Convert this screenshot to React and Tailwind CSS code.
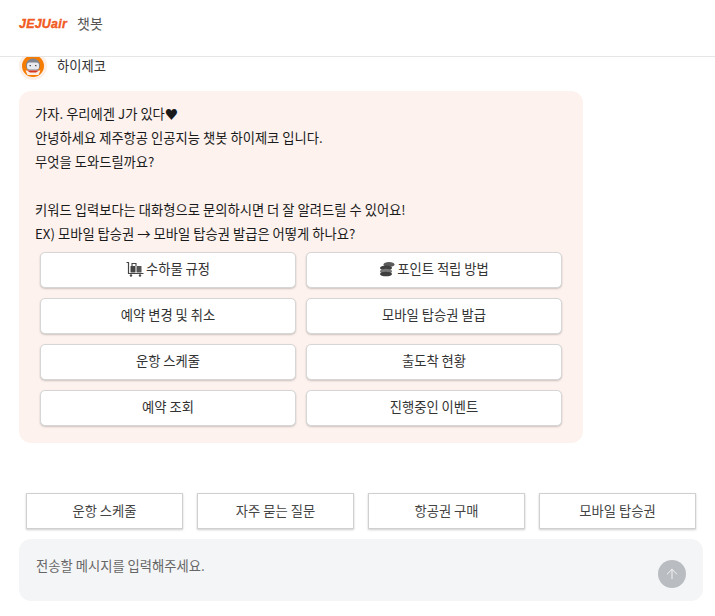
import { ArrowUp } from "lucide-react";

const font = "font-['Noto_Sans_CJK_KR','Noto_Sans',sans-serif]";

function Logo() {
  return (
    <span className="font-['Liberation_Sans',sans-serif] text-[12.5px] leading-none font-bold tracking-[0.2px] text-[#f15a22] italic [-webkit-text-stroke:0.35px_#f15a22]">
      JEJUair
    </span>
  );
}

function Avatar() {
  return (
    <svg width="28" height="28" viewBox="0 0 28 28" className="block shrink-0">
      <circle cx="14" cy="14" r="14" fill="#fdeee6" />
      <circle cx="14" cy="14" r="11" fill="#f57c00" />
      <circle cx="14" cy="13.5" r="7" fill="#7f8490" />
      <rect x="8" y="10.5" width="12" height="7" rx="2.5" fill="#e8eaef" />
      <rect x="10.5" y="13" width="1.5" height="1.2" fill="#555" />
      <rect x="16" y="13" width="1.5" height="1.2" fill="#555" />
      <path d="M6.5 18.5 L21.5 18.5 L19.5 23 L8.5 23 Z" fill="#fdeee6" />
      <path d="M8 18.5 L20 18.5 L17 20.5 L11 20.5 Z" fill="#d9381e" />
    </svg>
  );
}

function BaggageIcon() {
  return (
    <svg width="18" height="16" viewBox="0 0 18 16" fill="none">
      <path d="M0.5 1.5 H2.5 V12.5 H17.5" stroke="#444" strokeWidth="1.2" />
      <rect x="4.5" y="5" width="5" height="6.5" rx="0.5" fill="#444" />
      <rect x="10.5" y="5" width="5" height="6.5" rx="0.5" fill="#555" />
      <path d="M6 5 V2.5 H10 V5" stroke="#444" strokeWidth="1.1" />
      <circle cx="5" cy="14.5" r="1.2" fill="#444" />
      <circle cx="14" cy="14.5" r="1.2" fill="#444" />
    </svg>
  );
}

function CoinIcon() {
  return (
    <svg width="16" height="16" viewBox="0 0 16 16">
      <ellipse cx="10" cy="3.5" rx="5.5" ry="2.5" fill="#5a5a5a" />
      <ellipse cx="7" cy="7" rx="6" ry="2.4" fill="#3f3f3f" />
      <ellipse cx="7" cy="10.2" rx="6" ry="2.4" fill="#777" />
      <ellipse cx="7" cy="13" rx="6" ry="2.3" fill="#3f3f3f" />
    </svg>
  );
}

function MenuButton({ icon, label }) {
  return (
    <button className="flex h-[36px] items-center justify-center gap-[2px] rounded-[5px] border border-[#d6d6d6] bg-white pb-[2px] text-[13.3px] text-[#333] shadow-[0_1px_2px_rgba(0,0,0,0.2)]">
      {icon}
      {label}
    </button>
  );
}

function QuickButton({ label }) {
  return (
    <button className="h-[36px] w-[157px] border border-[#d0d0d0] bg-white text-[13.3px] text-[#444] shadow-[0_1px_2px_rgba(0,0,0,0.2)]">
      {label}
    </button>
  );
}

export default function App() {
  return (
    <div className={`flex h-[616px] w-[715px] flex-col overflow-hidden bg-white ${font}`}>
      <header className="relative z-10 flex h-[57px] shrink-0 items-start gap-[13px] border-b border-[#e6e6e6] bg-white pt-[14px] pl-[19px]">
        <div className="flex h-[20px] w-[45px] items-center">
          <Logo />
        </div>
        <span className="-mt-[1px] text-[14px] leading-[20px] text-[#555]">챗봇</span>
      </header>

      <main className="flex-1 px-[19px]">
        <div className="-mt-[5px] flex h-[27px] items-start gap-[10px]">
          <Avatar />
          <span className="mt-[5px] text-[13.3px] leading-[18px] text-[#333]">하이제코</span>
        </div>

        <div className="mt-[12px] w-[564px] rounded-[12px] bg-[#fdf2ee] px-[16px] pt-[11px] pb-[17px]">
          <div className="text-[13.3px] leading-[24px] text-[#1a1a1a]">
            <p>가자. 우리에겐 J가 있다♥</p>
            <p>안녕하세요 제주항공 인공지능 챗봇 하이제코 입니다.</p>
            <p>무엇을 도와드릴까요?</p>
            <p className="h-[24px]" />
            <p>키워드 입력보다는 대화형으로 문의하시면 더 잘 알려드릴 수 있어요!</p>
            <p>EX) 모바일 탑승권 → 모바일 탑승권 발급은 어떻게 하나요?</p>
          </div>
          <div className="mt-[6px] grid grid-cols-2 gap-x-[10px] gap-y-[10px] px-[5px]">
            <MenuButton icon={<BaggageIcon />} label="수하물 규정" />
            <MenuButton icon={<CoinIcon />} label="포인트 적립 방법" />
            <MenuButton label="예약 변경 및 취소" />
            <MenuButton label="모바일 탑승권 발급" />
            <MenuButton label="운항 스케줄" />
            <MenuButton label="출도착 현황" />
            <MenuButton label="예약 조회" />
            <MenuButton label="진행중인 이벤트" />
          </div>
        </div>
      </main>

      <div className="flex gap-[14px] pr-[19px] pl-[26px]">
        <QuickButton label="운항 스케줄" />
        <QuickButton label="자주 묻는 질문" />
        <QuickButton label="항공권 구매" />
        <QuickButton label="모바일 탑승권" />
      </div>

      <div className="mt-[10px] mr-[12px] mb-[15px] ml-[19px] flex h-[62px] items-start justify-between rounded-[12px] bg-[#f4f5f7] pt-[18px] pr-[17px] pl-[17px]">
        <span className="text-[13.3px] leading-[18px] text-[#666]">전송할 메시지를 입력해주세요.</span>
        <div className="mt-[3px] flex h-[28px] w-[28px] items-center justify-center rounded-full bg-[#b9bcc1]">
          <ArrowUp size={16} strokeWidth={1.25} className="text-white" />
        </div>
      </div>
    </div>
  );
}
